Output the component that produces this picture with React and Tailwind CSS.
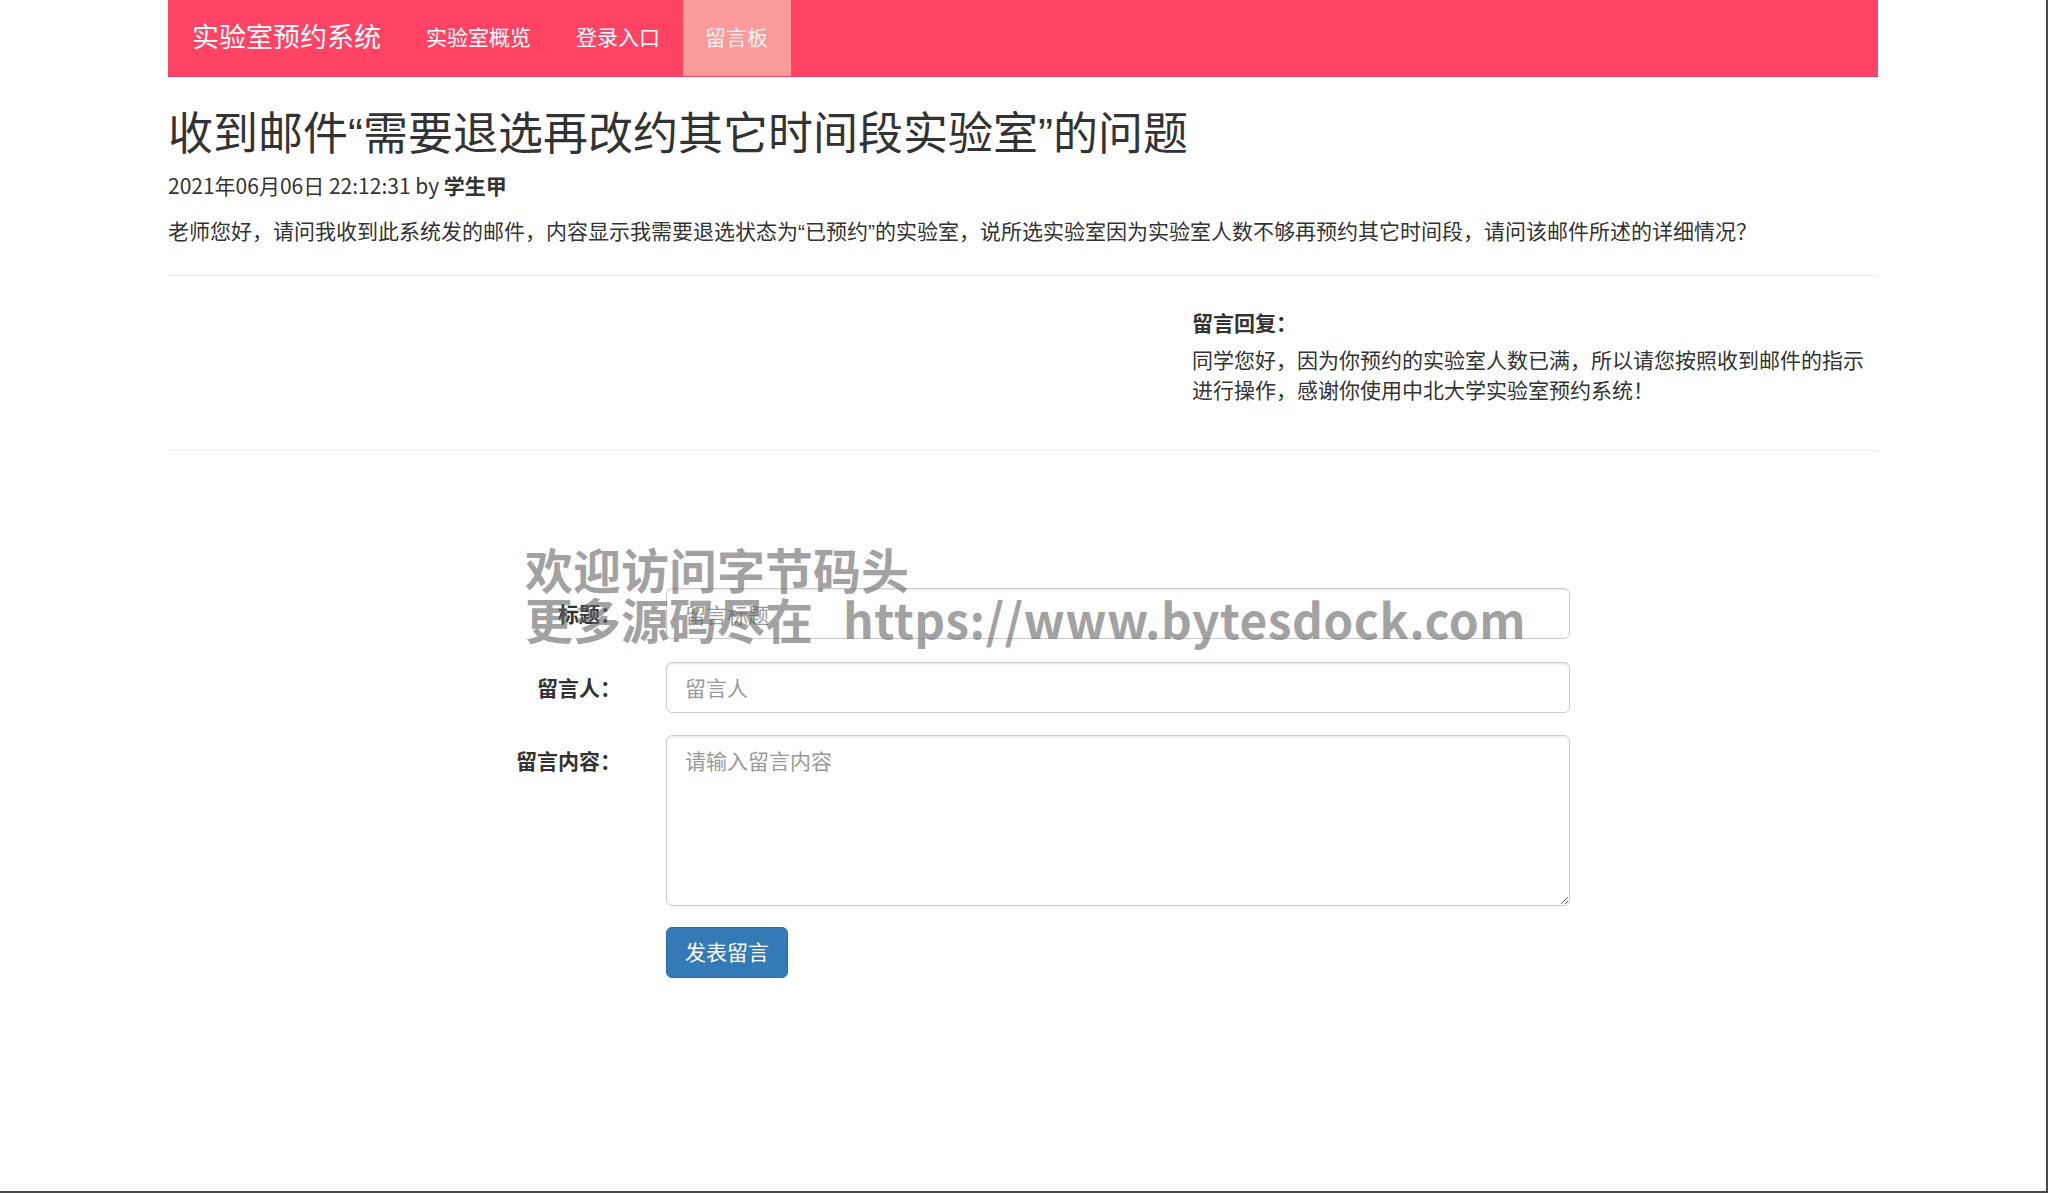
import React from 'react';

const navLinks = [
  { label: '实验室概览', active: false },
  { label: '登录入口', active: false },
  { label: '留言板', active: true },
];

// narrow (western) curly quotes like the reference font renders them
function Q({ children }) {
  return <span className="font-['Liberation_Sans',sans-serif] leading-[0]">{children}</span>;
}

function FormRow({ label, children }) {
  return (
    <div className="flex mb-[22.5px]">
      <label className="w-[195.5px] flex-none text-right pr-[22.5px] pt-[10px] font-bold leading-[30px]">
        {label}
      </label>
      <div className="flex-none w-[949px] pl-[22.5px] pr-[22.5px]">{children}</div>
    </div>
  );
}

export default function App() {
  const inputCls =
    'block w-[904px] h-[51px] px-[18px] py-[9px] text-[21px] leading-[30px] text-[#555] bg-white border-[1.5px] border-[#ccc] rounded-[6px] shadow-[inset_0_1.5px_1.5px_rgba(0,0,0,0.075)] placeholder:text-[#999] focus:outline-none';

  return (
    <div className="relative h-[1193px] overflow-hidden bg-white border-r-2 border-b-2 border-[#4a4747] text-[#333] text-[21px] leading-[30px] font-['Noto_Sans_CJK_SC','Noto_Sans',sans-serif]">
      <div className="mx-auto w-[1710px]">
        {/* navbar */}
        <nav className="flex h-[76.5px] bg-[#fe4365] border-b-[1.5px] border-[#ec3f5e]">
          <a className="flex items-center pl-[24px] pr-[22.5px] pb-[3px] text-[27px] text-white">实验室预约系统</a>
          {navLinks.map((l) => (
            <a
              key={l.label}
              className={`flex items-center px-[22.5px] pb-[3px] text-[21px] ${
                l.active ? 'bg-[#fb9a9a] text-[#fff3f3]' : 'text-white'
              }`}
            >
              {l.label}
            </a>
          ))}
        </nav>

        {/* message */}
        <h2 className="mt-[29px] mb-[15px] h-[49.5px] text-[45px] leading-[49.5px] font-normal">
          收到邮件<Q>“</Q>需要退选再改约其它时间段实验室<Q>”</Q>的问题
        </h2>
        <p className="mb-[15px]">
          2021年06月06日 22:12:31 by <b>学生甲</b>
        </p>
        <p className="h-[30px]">
          老师您好，请问我收到此系统发的邮件，内容显示我需要退选状态为<Q>“</Q>已预约<Q>”</Q>的实验室，说所选实验室因为实验室人数不够再预约其它时间段，请问该邮件所述的详细情况？
        </p>
        <hr className="mt-[30px] border-t-[1.5px] border-[#eee]" />

        {/* reply */}
        <div className="pt-[30.5px] pb-[46.5px] pl-[1024px]">
          <div className="w-[686px]">
            <div className="font-bold mb-[7px]">留言回复：</div>
            <p>同学您好，因为你预约的实验室人数已满，所以请您按照收到邮件的指示进行操作，感谢你使用中北大学实验室预约系统！</p>
          </div>
        </div>
        <hr className="border-t-[1.5px] border-[#eee]" />

        {/* form */}
        <form className="pt-[137px] ml-[280px]">
          <FormRow label="标题：">
            <input className={inputCls} placeholder="留言标题" />
          </FormRow>
          <FormRow label="留言人：">
            <input className={inputCls} placeholder="留言人" />
          </FormRow>
          <FormRow label="留言内容：">
            <textarea
              rows={5}
              className="block w-[904px] h-[171px] px-[18px] py-[9px] text-[21px] leading-[30px] text-[#555] bg-white border-[1.5px] border-[#ccc] rounded-[6px] shadow-[inset_0_1.5px_1.5px_rgba(0,0,0,0.075)] placeholder:text-[#999] focus:outline-none"
              placeholder="请输入留言内容"
            />
          </FormRow>
          <div className="pl-[218px] -mt-[2px]">
            <button
              type="button"
              className="h-[51px] px-[18px] pb-[2px] text-[21px] leading-[30px] text-white bg-[#337ab7] border-[1.5px] border-[#2e6da4] rounded-[6px]"
            >
              发表留言
            </button>
          </div>
        </form>
      </div>

      {/* watermark */}
      <div className="absolute left-[525px] top-[543px] text-[48px] leading-[50px] font-bold text-[rgba(100,100,100,0.6)] pointer-events-none whitespace-nowrap">
        <div>欢迎访问字节码头</div>
        <div>
          更多源码尽在<span className="ml-[30px] tracking-[0.4px]">https://www.bytesdock.com</span>
        </div>
      </div>
    </div>
  );
}
